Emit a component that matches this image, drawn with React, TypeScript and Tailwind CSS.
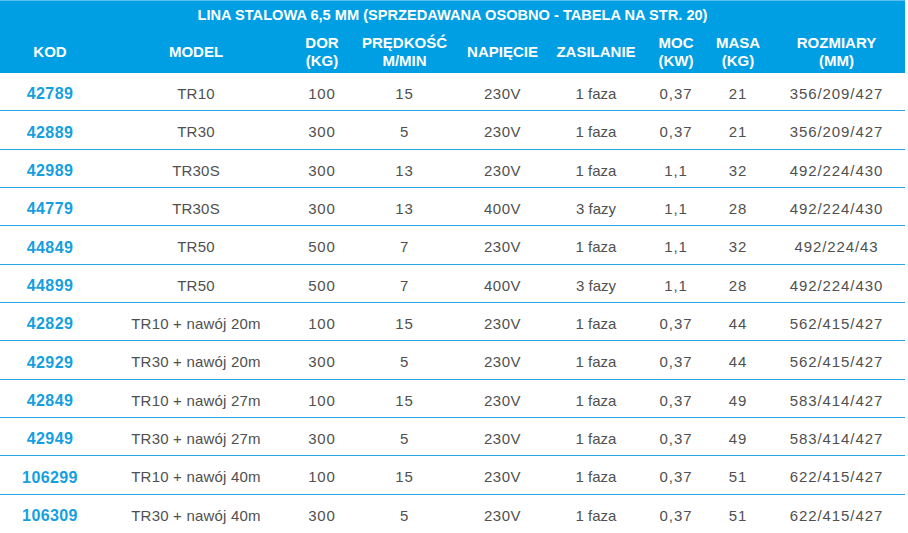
import React from "react";

const cols = ["w-[100px]", "w-[192px]", "w-[60px]", "w-[105px]", "w-[91px]", "w-[96px]", "w-[64px]", "w-[60px]", "w-[137px]"];

const cellCls = [
  "text-[#159fe0] font-bold text-[16px] tracking-[0.4px]",
  "text-[#505050] text-[15px] tracking-[0.2px]",
  "text-[#505050] text-[15px] tracking-[0.9px]",
  "text-[#505050] text-[15px] tracking-[0.9px]",
  "text-[#505050] text-[15px] tracking-[0.5px]",
  "text-[#505050] text-[15px] tracking-[0px]",
  "text-[#505050] text-[15px] tracking-[0.9px]",
  "text-[#505050] text-[15px] tracking-[0.9px]",
  "text-[#505050] text-[15px] tracking-[0.9px]",
];

const rows: string[][] = [
  ["42789", "TR10", "100", "15", "230V", "1 faza", "0,37", "21", "356/209/427"],
  ["42889", "TR30", "300", "5", "230V", "1 faza", "0,37", "21", "356/209/427"],
  ["42989", "TR30S", "300", "13", "230V", "1 faza", "1,1", "32", "492/224/430"],
  ["44779", "TR30S", "300", "13", "400V", "3 fazy", "1,1", "28", "492/224/430"],
  ["44849", "TR50", "500", "7", "230V", "1 faza", "1,1", "32", "492/224/43"],
  ["44899", "TR50", "500", "7", "400V", "3 fazy", "1,1", "28", "492/224/430"],
  ["42829", "TR10 + nawój 20m", "100", "15", "230V", "1 faza", "0,37", "44", "562/415/427"],
  ["42929", "TR30 + nawój 20m", "300", "5", "230V", "1 faza", "0,37", "44", "562/415/427"],
  ["42849", "TR10 + nawój 27m", "100", "15", "230V", "1 faza", "0,37", "49", "583/414/427"],
  ["42949", "TR30 + nawój 27m", "300", "5", "230V", "1 faza", "0,37", "49", "583/414/427"],
  ["106299", "TR10 + nawój 40m", "100", "15", "230V", "1 faza", "0,37", "51", "622/415/427"],
  ["106309", "TR30 + nawój 40m", "300", "5", "230V", "1 faza", "0,37", "51", "622/415/427"],
];

const heads: string[][] = [
  ["KOD"],
  ["MODEL"],
  ["DOR", "(KG)"],
  ["PRĘDKOŚĆ", "M/MIN"],
  ["NAPIĘCIE"],
  ["ZASILANIE"],
  ["MOC", "(KW)"],
  ["MASA", "(KG)"],
  ["ROZMIARY", "(MM)"],
];

export default function App() {
  return (
    <div className="w-[908px] h-[533px] bg-white overflow-hidden" style={{ fontFamily: '"Liberation Sans", Arial, sans-serif' }}>
      <div className="w-[905px]">
        <div className="bg-[#009fe3] border-t border-[#5cc0ec] h-[73px] flex flex-col text-white font-bold">
          <div className="h-[28px] flex items-center justify-center text-[14.6px] pt-[2px]">
            LINA STALOWA 6,5 MM (SPRZEDAWANA OSOBNO - TABELA NA STR. 20)
          </div>
          <div className="flex flex-1 items-center pt-[1px]">
            {heads.map((h, i) => (
              <div key={i} className={`${cols[i]} flex flex-col items-center justify-center text-[15px] leading-[18px]`}>
                {h.map((l, j) => (
                  <span key={j}>{l}</span>
                ))}
              </div>
            ))}
          </div>
        </div>
        {rows.map((r, ri) => (
          <div
            key={ri}
            className={`flex items-center h-[38.35px] pt-[5px] ${ri < rows.length - 1 ? "border-b-[1.5px] border-[#27a6e4]" : ""}`}
          >
            {r.map((c, ci) => (
              <div key={ci} className={`${cols[ci]} text-center ${cellCls[ci]}`}>
                {c}
              </div>
            ))}
          </div>
        ))}
      </div>
    </div>
  );
}
